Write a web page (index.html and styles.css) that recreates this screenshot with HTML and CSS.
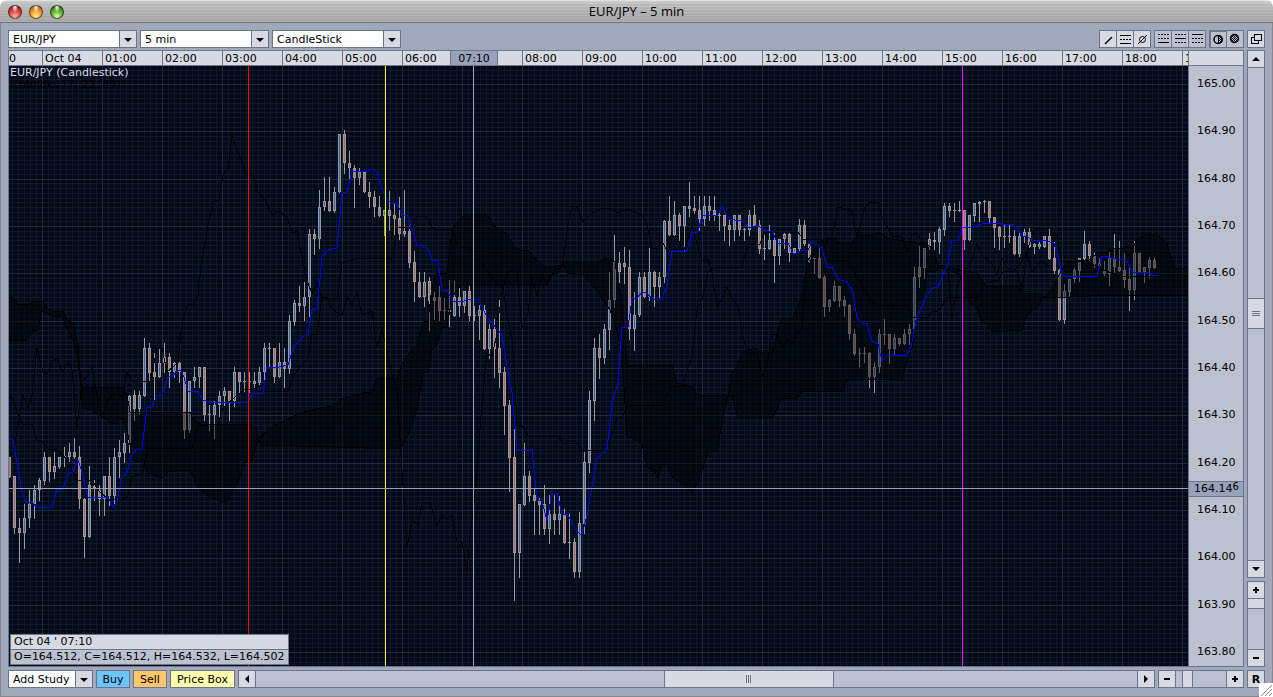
FILE: index.html
```html
<!DOCTYPE html>
<html lang="en">
<head>
  <meta charset="UTF-8">
  <title>EUR/JPY – 5 min</title>
  <link rel="stylesheet" href="styles.css">
</head>
<body>
  <header class="titlebar">
    <div class="lights">
      <button class="light red" aria-label="Close"></button>
      <button class="light amber" aria-label="Minimize"></button>
      <button class="light green" aria-label="Zoom"></button>
    </div>
    <h1>EUR/JPY – 5 min</h1>
  </header>

  <main class="window">
    <div class="toolbar">
      <div class="combo">
        <select aria-label="Instrument"><option>EUR/JPY</option></select>
      </div>
      <div class="combo">
        <select aria-label="Interval"><option>5 min</option></select>
      </div>
      <div class="combo">
        <select aria-label="Chart type"><option>CandleStick</option></select>
      </div>

      <div class="tools">
        <button aria-label="Trend line"><svg viewBox="0 0 16 16"><path d="M5 13L12 6" stroke-width="1.5"/></svg></button>
        <button aria-label="Channel"><svg viewBox="0 0 16 16"><path class="crisp" d="M3 4.5h11M3 12.5h11"/><path class="crisp" d="M3 8.5h11" stroke-dasharray="2 1"/></svg></button>
        <button aria-label="Remove lines"><svg viewBox="0 0 16 16"><circle cx="8.500" cy="8.500" r="3"/><path d="M4 13L13 4"/></svg></button>
      </div>
      <div class="tools flat">
        <button aria-label="Levels bottom"><svg viewBox="0 0 16 16"><path class="crisp" d="M3 3.500h11M3 7.500h11" stroke-dasharray="2 1"/><path class="crisp" d="M3 11.500h11"/></svg></button>
        <button aria-label="Levels middle"><svg viewBox="0 0 16 16"><path class="crisp" d="M3 3.500h11M3 11.500h11" stroke-dasharray="2 1"/><path class="crisp" d="M3 7.500h11"/></svg></button>
        <button aria-label="Levels top"><svg viewBox="0 0 16 16"><path class="crisp" d="M3 7.500h11M3 11.500h11" stroke-dasharray="2 1"/><path class="crisp" d="M3 3.500h11"/></svg></button>
      </div>
      <div class="tools flat">
        <button class="pressed" aria-label="Half shade"><svg viewBox="0 0 16 16"><circle cx="8" cy="8.500" r="4" stroke-width="1.5"/><path d="M8.500 4.500a4 4 0 0 1 0 8z" fill="url(#check)"/></svg></button>
        <button aria-label="Full shade"><svg viewBox="0 0 16 16"><circle cx="7.500" cy="7.500" r="4" fill="url(#check)" stroke-width="1.5"/></svg></button>
      </div>
      <div class="tools single">
        <button aria-label="Detach"><svg viewBox="0 0 16 16"><path class="crisp" d="M6.500 3.500h7v6h-7z" stroke-width="1.5"/><path class="crisp" d="M6 6.500H3.500v6h7V10" stroke-width="1.5"/></svg></button>
      </div>
    </div>

    <div class="middle">
      <div class="chart">
        <div class="times">
          <span class="part">0</span><span>Oct 04</span><span>01:00</span><span>02:00</span><span>03:00</span><span>04:00</span><span>05:00</span><span>06:00</span><span></span><span>08:00</span><span>09:00</span><span>10:00</span><span>11:00</span><span>12:00</span><span>13:00</span><span>14:00</span><span>15:00</span><span>16:00</span><span>17:00</span><span>18:00</span><span>19:00</span>
          <b class="time-mark">07:10</b>
        </div>
        <div class="corner"></div>
        <div class="plot">
          <svg id="plot" role="img" aria-label="EUR/JPY candlestick chart">
            <defs>
              <pattern id="check" width="2" height="2" patternUnits="userSpaceOnUse"><path d="M0 0h1v1H0zM1 1h1v1H1z" fill="#000" stroke="none"/></pattern>
            </defs>
            <g id="grid"></g>
            <g transform="translate(-9 -66)">
              <g id="candles"></g>
              <g id="clouds"></g>
              <g id="studies"></g>
            </g>
            <g id="marks"></g>
          </svg>
          <p class="legend">EUR/JPY (Candlestick)<br><span>Ichimoku (7, 22, 44)</span></p>
          <div class="quote">
            <div>Oct 04 ' 07:10</div>
            <div>O=164.512, C=164.512, H=164.532, L=164.502</div>
          </div>
        </div>
        <div class="prices">
          <span>165.00</span><span>164.90</span><span>164.80</span><span>164.70</span><span>164.60</span><span>164.50</span><span>164.40</span><span>164.30</span><span>164.20</span><span>164.10</span><span>164.00</span><span>163.90</span><span>163.80</span>
          <b class="price-mark">164.14<sup>6</sup></b>
        </div>
      </div>

      <div class="side">
        <div class="scroll vertical">
          <button aria-label="Scroll up"><i class="arrow up"></i></button>
          <div class="track"><span class="before"></span><span class="thumb"></span><span class="after"></span></div>
          <button aria-label="Scroll down"><i class="arrow down"></i></button>
        </div>
        <div class="scroll vertical zoom">
          <button aria-label="Zoom price in"><i class="plus"></i></button>
          <input type="range" aria-label="Price zoom" min="0" max="100" value="0">
          <button aria-label="Zoom price out"><i class="minus"></i></button>
        </div>
      </div>
    </div>

    <div class="bottom">
      <div class="combo study">
        <select aria-label="Add Study"><option>Add Study</option></select>
      </div>
      <button class="btn buy">Buy</button>
      <button class="btn sell">Sell</button>
      <button class="btn box">Price Box</button>
      <div class="scroll horizontal">
        <button aria-label="Scroll left"><i class="arrow left"></i></button>
        <div class="track"><span class="before"></span><span class="thumb"></span><span class="after"></span></div>
        <button aria-label="Scroll right"><i class="arrow right"></i></button>
      </div>
      <div class="scroll horizontal zoom">
        <button aria-label="Zoom time out"><i class="minus"></i></button>
        <input type="range" aria-label="Time zoom" min="0" max="100" value="15">
        <button aria-label="Zoom time in"><i class="plus"></i></button>
      </div>
      <button class="btn reset">R</button>
    </div>
    <svg class="grip" viewBox="0 0 14 14"><path d="M2 13L13 2M6 13L13 6M10 13L13 10"/></svg>
  </main>

  <script src="chart.js"></script>
</body>
</html>
```
FILE: styles.css
```css
* {
  box-sizing: border-box;
}
body {
  margin: 0;
  height: 100vh;
  display: flex;
  flex-direction: column;
  background: #fff;
  color: #000;
  font: 11px/14px "Lucida Sans", "DejaVu Sans", sans-serif;
}
button, select, input {
  font: inherit;
  color: inherit;
  margin: 0;
  padding: 0;
  border: 0;
  border-radius: 0;
}
.titlebar {
  position: relative;
  height: 23px;
  flex: none;
  border-bottom: 1px solid #77777a;
  border-radius: 7px 7px 0 0;
  background:
    repeating-linear-gradient(rgba(255,255,255,0.06) 0 1px, rgba(0,0,0,0.03) 1px 3px),
    linear-gradient(#e4e4e4 0, #c4c4c4 3px, #b6b6b6 50%, #a9a9a9 100%);
}
.titlebar h1 {
  margin: 0;
  text-align: center;
  font: 13px/23px "Lucida Grande", "Open Sans", "Noto Sans", sans-serif;
}
.lights {
  position: absolute;
  left: 8px;
  top: 5px;
  display: flex;
  gap: 7px;
}
.light {
  width: 14px;
  height: 14px;
  border-radius: 50%;
  border: 1px solid rgba(40,20,20,0.65);
}
.red {
  background: radial-gradient(ellipse at 50% 10%, #fff 0, rgba(255,255,255,0) 35%), radial-gradient(circle at 50% 85%, #ffb0a4, #d9453f 50%, #7a1414);
}
.amber {
  background: radial-gradient(ellipse at 50% 10%, #fff 0, rgba(255,255,255,0) 35%), radial-gradient(circle at 50% 85%, #fff08a, #f09a2c 50%, #8a4a08);
}
.green {
  background: radial-gradient(ellipse at 50% 10%, #fff 0, rgba(255,255,255,0) 35%), radial-gradient(circle at 50% 85%, #d8ff9a, #55ac2c 50%, #1d5a10);
}
.window {
  position: relative;
  flex: 1;
  min-height: 0;
  display: flex;
  flex-direction: column;
  padding: 7px 7px 8px;
  border: 1px solid #85858a;
  border-top: 0;
  background: #a0a9bb;
}
.toolbar {
  display: flex;
  gap: 3px;
  height: 18px;
  margin-bottom: 2px;
}

/* drop-downs */
.combo {
  position: relative;
  width: 129px;
  height: 18px;
}
.combo select {
  appearance: none;
  width: 100%;
  height: 18px;
  padding: 1px 20px 0 4px;
  border: 1px solid #6b7489;
  background: linear-gradient(#6b7489, #6b7489) right 16px top / 1px 100% no-repeat,
    linear-gradient(#d7dae3, #d7dae3) right / 16px 100% no-repeat, #fff;
}
.combo::after {
  content: "";
  position: absolute;
  right: 5px;
  top: 8px;
  border: 4px solid transparent;
  border-top-color: #000;
  border-bottom: 0;
  pointer-events: none;
}
.study {
  width: 85px;
}

/* icon buttons */
.tools {
  display: flex;
  border: 1px solid #6b7489;
}
.tools:nth-of-type(4) {
  margin-left: auto;
}
.tools button {
  width: 17px;
  height: 16px;
  background: #d7dae3;
  border-left: 1px solid #6b7489;
}
.tools button:first-child {
  width: 16px;
  border-left: 0;
}
.flat button {
  background: #bcc1cf;
}
.tools .pressed {
  width: 17px;
  box-shadow: inset 1px 1px #77777a;
}
.tools svg {
  display: block;
  width: 16px;
  height: 16px;
  fill: none;
  stroke: #000;
}
.crisp {
  shape-rendering: crispEdges;
}

/* chart */
.middle {
  flex: 1;
  min-height: 0;
  display: flex;
  gap: 3px;
  margin-bottom: 3px;
}
.chart {
  flex: 1;
  min-width: 0;
  display: grid;
  grid-template: 15px minmax(0, 1fr) / minmax(0, 1fr) 55px;
  border: 1px solid #6b7489;
  background: #bcc1cf;
}
.times {
  position: relative;
  display: flex;
  overflow: hidden;
  line-height: 15px;
  background: #d7dae3;
  border-bottom: 1px solid #6b7489;
}
.times span {
  flex: none;
  width: 60px;
  padding-left: 2px;
  border-left: 1px solid #6b7489;
}
.times .part {
  width: 33px;
  padding-left: 0;
  border-left: 0;
}
.time-mark {
  position: absolute;
  left: 441px;
  width: 48px;
  height: 14px;
  border: solid #6b7489;
  border-width: 0 1px;
  background: #98a3bb;
  font-weight: normal;
  text-align: center;
}
.corner {
  background: #d7dae3;
  border-left: 1px solid #6b7489;
  border-bottom: 1px solid #6b7489;
}
.plot {
  position: relative;
  overflow: hidden;
  background: #020a1a;
}
.plot > svg {
  display: block;
  width: 100%;
  height: 100%;
  shape-rendering: crispEdges;
}
.legend {
  position: absolute;
  left: 1px;
  top: 1px;
  margin: 0;
  line-height: 12px;
  color: #d8dce4;
}
.legend span {
  color: #000;
}
.quote {
  position: absolute;
  left: 1px;
  bottom: 1px;
  border: 1px solid #6b7489;
  background: #bcc1cf;
}
.quote div {
  padding: 0 3px;
}
.quote div:first-child {
  height: 15px;
  background: #d7dae3;
  border-bottom: 1px solid #6b7489;
}
.prices {
  position: relative;
  display: flex;
  flex-direction: column;
  justify-content: space-between;
  padding: 11px 0 7px 8px;
  border-left: 1px solid #6b7489;
}
.price-mark {
  position: absolute;
  left: 0;
  right: 0;
  top: 415px;
  height: 16px;
  padding-left: 5px;
  border: solid #6b7489;
  border-width: 1px 0;
  background: #98a3bb;
  font-weight: normal;
}
.price-mark sup {
  font-size: 10px;
  line-height: 0;
  vertical-align: 2px;
}

/* scroll bars */
.side {
  display: flex;
  flex-direction: column;
  gap: 3px;
  width: 18px;
}
.scroll {
  display: flex;
  border: 1px solid #6b7489;
  background: #bcc1cf;
}
.scroll button {
  display: grid;
  place-items: center;
  flex: none;
  width: 16px;
  height: 16px;
  background: #d7dae3;
}
.vertical {
  flex-direction: column;
  flex: 1;
}
.vertical.zoom {
  flex: none;
  height: 86px;
}
.horizontal {
  flex: 1;
}
.horizontal.zoom {
  flex: none;
  width: 86px;
}
.track {
  flex: 1;
  display: flex;
}
.vertical .track {
  flex-direction: column;
  border: solid #6b7489;
  border-width: 1px 0;
}
.horizontal .track {
  border: solid #6b7489;
  border-width: 0 1px;
}
.vertical .before {
  flex: 230;
}
.vertical .after {
  flex: 231;
}
.horizontal .before {
  flex: 409;
}
.horizontal .after {
  flex: 304;
}
.thumb {
  background: #d7dae3;
}
.vertical .thumb {
  height: 31px;
  border: solid #6b7489;
  border-width: 1px 0;
  background: repeating-linear-gradient(#6b7489 0 1px, transparent 1px 2px) center / 8px 5px no-repeat, #d7dae3;
}
.horizontal .thumb {
  flex: 168;
  border: solid #6b7489;
  border-width: 0 1px;
  background: repeating-linear-gradient(90deg, #6b7489 0 1px, transparent 1px 2px) center / 5px 8px no-repeat, #d7dae3;
}
.zoom input {
  appearance: none;
  flex: 1;
  min-width: 0;
  min-height: 0;
  background: none;
}
.vertical input {
  writing-mode: vertical-lr;
  width: 16px;
  border: solid #6b7489;
  border-width: 1px 0;
}
.horizontal input {
  height: 16px;
  border: solid #6b7489;
  border-width: 0 1px;
}
.zoom input::-webkit-slider-thumb {
  appearance: none;
  width: 11px;
  height: 16px;
  border: solid #6b7489;
  border-width: 0 1px;
  background: #d7dae3;
}
.vertical input::-webkit-slider-thumb {
  width: 16px;
  height: 10px;
  border-width: 0 0 1px;
}
.arrow {
  border: 4px solid transparent;
}
.up {
  border-top: 0;
  border-bottom-color: #000;
}
.down {
  border-bottom: 0;
  border-top-color: #000;
}
.left {
  border-left: 0;
  border-right-color: #000;
}
.right {
  border-right: 0;
  border-left-color: #000;
}
.plus, .minus {
  width: 6px;
  height: 6px;
  background: linear-gradient(#000, #000) center / 6px 2px no-repeat;
}
.plus {
  background: linear-gradient(#000, #000) center / 6px 2px no-repeat,
    linear-gradient(#000, #000) center / 2px 6px no-repeat;
}

/* bottom bar */
.bottom {
  display: flex;
  gap: 3px;
  height: 18px;
}
.btn {
  width: 34px;
  padding-top: 1px;
  border: 1px solid #6b7489;
  line-height: 14px;
}
.buy {
  background: #6cc5ff;
}
.sell {
  background: #ffc66c;
}
.box {
  width: 65px;
  background: #ffffb0;
}
.reset {
  width: 18px;
  background: #d7dae3;
  font-weight: bold;
}
.grip {
  position: absolute;
  right: -1px;
  bottom: -1px;
  width: 14px;
  height: 14px;
  background: #fff;
  border-radius: 2px 0 0 0;
  stroke: #888;
  fill: none;
}

/* chart shapes */
.minor {
  fill: #0d1828;
}
.major {
  fill: #202a3a;
}
.wick {
  fill: #999;
}
.up-body {
  fill: #3f64a4;
}
.down-body {
  fill: #b06a68;
}
#clouds path {
  fill: #000;
  fill-opacity: 0.4;
  stroke: #000;
}
#studies polyline {
  fill: none;
  stroke: #000;
}
#studies .fast {
  stroke: #00f;
}
```
FILE: chart.js
```js
const SVG = "http://www.w3.org/2000/svg";

// high, body top, body bottom, low, direction; one bar every 5 units
const bars = `
457 457 477 477 d,476 476 528 533 d,518 528 533 562 d,504 518 533 548 u,490 504 518 527 u,485 490 504 518 u,478 480 490 500 u,452 457 481 484 u,457 457 472 481 d,452 466 472 478 u,
457 457 467 468 u,447 456 457 466 d,443 452 457 461 u,438 452 457 458 d,446 457 499 508 d,498 499 537 557 d,466 485 537 537 u,480 486 488 500 d,485 490 499 515 d,476 476 499 515 u,
457 476 496 505 d,448 457 496 505 u,440 452 457 477 u,433 443 453 462 u,395 396 443 452 u,390 395 409 420 d,391 395 409 414 u,338 348 396 396 u,343 348 373 380 d,353 372 377 401 d,
348 363 377 377 u,343 357 363 372 d,353 357 372 387 d,362 363 372 377 u,362 363 372 382 d,372 372 430 438 d,381 381 430 432 u,367 377 381 387 u,367 367 377 387 u,367 367 415 420 d,
405 414 415 430 d,401 405 415 438 u,391 396 405 420 u,387 391 396 405 u,391 391 401 420 d,367 372 401 406 u,372 372 382 392 d,372 381 382 391 d,372 381 382 392 d,372 381 384 387 d,
367 372 383 384 u,343 348 372 381 u,343 348 349 367 d,348 348 377 382 d,343 362 377 377 u,348 362 369 387 d,315 321 369 373 u,300 303 322 325 u,286 303 306 311 d,282 297 306 320 u,
229 234 297 316 u,229 234 239 254 d,190 207 239 248 u,177 201 207 210 u,177 201 211 211 d,187 192 211 212 u,134 134 192 192 u,130 134 163 173 d,151 163 168 178 d,165 168 178 207 d,
168 172 178 184 u,172 172 192 192 d,182 192 197 207 d,191 197 207 216 d,196 207 216 216 d,210 210 216 235 u,191 210 216 230 d,204 215 219 234 d,197 218 234 239 d,190 231 234 236 u,
229 231 263 267 d,251 262 282 301 d,272 282 297 297 d,272 282 297 306 u,277 281 301 330 d,292 297 301 319 u,286 297 311 320 d,298 310 311 319 d,280 310 312 326 d,281 297 316 316 u,
286 297 306 316 d,291 291 306 312 u,286 291 316 320 d,306 315 316 320 d,305 310 316 339 u,305 310 349 349 d,324 329 349 358 u,319 329 349 377 d,300 348 373 387 d,367 372 406 434 d,
400 405 458 491 d,429 457 553 600 d,504 504 553 577 u,443 476 505 505 u,471 476 496 501 d,489 495 501 534 d,498 501 505 534 d,485 504 529 534 d,495 514 529 543 u,495 514 520 534 d,
496 514 520 534 u,509 514 543 543 d,514 542 543 558 d,538 542 572 577 d,512 523 572 577 u,452 462 524 533 u,391 400 463 472 u,338 348 401 420 u,334 348 358 378 d,324 329 358 363 u,
272 300 330 349 u,235 262 300 307 u,252 263 272 282 d,247 263 267 283 d,250 267 329 339 d,292 315 329 350 u,272 277 315 316 u,272 277 297 297 d,248 272 297 300 u,271 272 287 306 d,
272 277 287 297 u,220 221 277 282 u,196 221 235 235 d,201 215 235 236 u,213 215 226 240 d,206 206 226 250 u,182 206 209 216 d,196 208 211 213 d,196 210 219 230 d,196 206 219 225 u,
196 206 211 220 d,196 210 215 220 d,210 215 216 230 d,215 215 226 240 d,220 225 230 245 d,215 215 230 240 u,215 215 230 235 d,228 229 230 240 d,210 215 230 235 u,205 215 226 226 d,
220 225 249 253 d,235 248 249 259 d,225 240 249 249 u,233 240 256 282 d,239 239 256 264 u,233 234 239 248 u,232 234 253 261 d,248 248 253 253 u,219 225 249 250 u,220 225 244 245 d,
244 244 262 263 d,258 258 259 273 d,248 258 278 278 d,275 277 307 316 d,299 300 307 311 u,281 286 301 301 u,286 286 301 306 d,296 300 306 316 d,304 305 334 339 d,329 334 354 355 d,
348 353 354 366 d,347 353 354 362 d,352 353 377 387 d,362 367 377 392 u,329 334 367 372 u,319 334 335 344 d,334 334 349 363 d,334 338 349 354 u,338 338 344 345 d,329 334 344 344 u,
324 329 334 344 u,267 277 329 330 u,246 267 277 287 d,248 248 268 278 u,233 239 247 249 u,232 240 242 249 d,227 229 242 253 u,203 206 230 235 u,203 206 211 216 d,203 210 211 221 d,
201 210 211 211 d,210 210 240 249 d,215 215 240 240 u,203 203 216 221 u,201 202 204 221 u,200 201 202 212 u,201 201 218 223 d,217 217 228 247 d,226 227 237 249 d,225 236 237 247 d,
225 236 237 242 d,230 236 254 254 d,230 236 254 256 u,229 232 237 242 u,228 232 247 247 d,243 244 247 253 u,242 244 247 248 u,236 236 247 247 u,229 236 259 259 d,242 258 271 273 d,
269 270 320 320 d,284 291 320 323 u,279 279 292 297 u,268 270 279 282 u,258 258 271 281 u,231 244 259 259 u,241 244 256 260 d,253 256 264 267 d,258 263 266 267 d,261 270 274 275 d,
252 258 274 285 u,234 258 267 272 d,241 267 271 271 d,253 270 280 287 d,266 279 290 310 d,241 253 290 299 u,253 253 272 272 d,267 267 272 282 u,257 260 268 277 u,258 260 268 268 d`;

const clouds = [
  "9,297 13,298 18,304 27,305 33,302 42,301 48,309 52,311 63,311 67,320 73,323 78,345 81,387 77,355 73,340 68,331 62,316 52,316 42,311 38,330 33,330 27,340 9,340",
  "81,387 123,387 127,395 130,412 190,412 193,419 200,424 248,424 256,427 258,440 252,461 245,463 238,482 233,490 228,500 223,503 217,499 210,498 205,493 198,488 192,473 187,470 168,472 162,478 148,473 142,463 133,460 130,445 127,430 123,418 118,420 113,425 108,420 97,414 92,410 83,408",
  "257,440 270,428 300,413 320,408 332,406 342,399 352,396 362,393 372,392 377,379 397,378 402,364 412,349 417,347 423,322 428,321 432,287 437,273 447,273 452,229 464,215 470,214 484,214 490,218 493,225 507,234 513,245 520,251 528,250 538,262 548,268 562,265 555,272 545,284 462,284 452,297 447,327 442,328 437,343 432,350 428,372 423,373 417,408 408,435 400,449 262,445",
  "562,262 598,262 608,258 615,262 618,283 622,303 627,365 672,365 677,383 692,387 697,395 728,395 723,417 717,450 708,453 698,482 692,493 683,484 673,478 667,464 662,464 658,478 652,469 647,468 642,444 632,438 627,437 622,353 614,320 610,310 593,285 583,275 567,273",
  "728,397 732,372 737,367 742,352 755,348 763,353 772,353 777,335 782,318 793,318 802,297 807,262 817,245 822,242 833,238 840,243 852,243 858,235 873,235 879,232 888,238 908,242 925,244 933,248 938,265 937,270 927,273 923,299 918,300 915,330 912,348 908,357 902,379 847,379 843,391 802,391 797,398 782,398 773,417 738,417 732,396",
  "938,265 960,270 977,273 985,286 1018,286 1022,293 1038,293 1043,298 1037,307 1027,315 1022,330 993,332 988,325 982,322 977,308 970,303 965,293 960,275 948,269",
  "1043,298 1053,288 1058,277 1063,267 1070,262 1088,261 1097,253 1108,252 1114,248 1123,249 1127,246 1133,249 1136,240 1147,234 1158,235 1167,243 1172,262 1175,268 1190,268 1190,295 1110,295 1070,297"
];

const baseLine = "9,397 12,398 22,424 32,424 37,440 42,441 47,449 58,450 67,460 72,470 77,480 92,480 98,490 108,499 125,499 128,495 132,477 143,473 147,448 192,448 198,426 218,424 223,408 235,397 245,389 258,391 288,391 293,378 298,369 307,360 312,335 317,334 322,298 337,298 342,263 357,258 393,258 397,227 412,227 417,216 423,216 428,218 433,229 452,229 458,247 467,248 473,253 480,262 487,270 497,284 503,288 507,315 512,340 514,367 517,425 522,426 528,436 558,436 562,443 578,443 582,450 607,450 617,418 623,416 628,405 662,405 672,386 683,386 688,367 692,358 698,300 702,300 708,272 717,267 742,267 748,244 760,244 764,232 798,232 803,239 822,239 828,260 847,260 857,277 872,302 878,305 907,305 912,317 927,318 932,312 938,311 948,297 978,297 985,283 998,280 1003,272 1013,271 1018,267 1027,252 1032,235 1037,228 1052,228 1057,236 1062,262 1077,261 1088,260 1097,268 1120,276 1160,276";

const lagLine = "9,455 13,453 17,432 23,395 28,408 32,395 37,348 43,372 47,375 52,362 57,358 62,372 68,362 72,370 77,429 82,381 87,377 92,367 98,402 102,415 107,403 113,393 117,393 123,398 127,372 132,381 150,382 157,349 162,348 167,372 173,367 178,362 182,322 188,304 193,304 198,296 199,280 207,230 213,202 219,200 223,175 228,170 232,135 237,150 243,165 248,177 253,173 258,192 265,200 272,215 278,211 287,217 292,233 297,231 303,262 308,283 312,294 317,282 322,298 327,297 332,310 342,315 347,297 352,305 357,292 362,315 372,311 377,348 382,330 387,350 392,375 397,390 402,470 407,548 412,520 418,525 422,503 430,502 437,527 442,514 447,519 452,515 457,542 462,542 467,570 470,537 474,503 478,457 482,403 487,353 492,357 497,333 499,313 503,288 508,272 517,270 522,328 528,313 532,278 537,296 542,274 547,286 552,274 558,273 563,262 568,225 572,206 577,207 583,222 592,213 602,208 612,209 617,213 627,209 642,215 647,225 652,248 657,249 662,241 668,253 672,238 677,235 683,252 687,242 692,226 702,261 708,259 712,273 717,307 722,299 727,287 732,299 738,306 742,333 748,354 757,353 762,377 767,365 772,334 777,334 782,348 788,339 793,343 797,332 802,329 807,270 812,258 818,242 832,237 838,207 852,211 857,237 865,207 870,202 878,202 882,217 892,236 902,237 907,252 912,235 917,233 922,242 933,248 938,268 948,270 952,318 958,283 965,272 972,260 977,244 982,255 992,264 997,275 1002,258 1007,268 1017,272 1022,290 1027,253 1032,272 1042,260 1048,267";

const fastLine = "9,439 13,440 17,463 23,497 27,502 33,503 37,508 52,507 57,489 63,489 68,474 73,472 78,460 82,472 88,497 108,497 113,507 117,502 122,477 127,473 132,455 137,449 142,449 147,407 152,407 157,395 162,395 168,377 173,376 177,370 181,371 184,377 188,391 198,391 203,400 211,402 248,402 253,393 263,393 267,367 279,367 288,365 293,349 302,337 308,334 312,309 317,309 322,257 327,251 332,248 337,248 342,193 347,192 352,171 367,171 372,169 377,172 382,189 388,201 392,203 397,203 402,215 408,216 417,245 423,246 428,249 432,260 438,261 442,290 447,290 453,301 464,301 468,299 478,299 487,317 502,335 507,367 512,393 517,450 532,450 537,500 542,501 547,521 552,493 557,493 562,514 568,515 577,532 582,535 587,515 597,458 607,450 612,403 618,383 622,327 628,327 632,299 637,298 642,292 647,293 652,299 662,299 667,285 672,251 687,251 692,232 698,232 702,215 718,215 722,206 728,219 742,221 748,227 753,227 757,225 764,230 773,232 777,243 788,243 793,253 797,253 802,250 808,250 812,242 822,248 827,267 832,267 838,279 847,282 853,293 857,318 862,323 867,323 872,341 878,344 882,361 888,355 907,355 911,347 917,317 927,295 933,288 938,287 948,263 952,241 958,240 963,227 972,227 985,223 998,223 1002,224 1012,224 1017,227 1022,236 1027,237 1032,240 1043,240 1054,243 1058,257 1062,275 1065,276 1097,276 1102,256 1109,257 1122,260 1127,261 1132,272 1147,272 1152,275 1158,275";

function add(id, name, attrs) {
  const el = document.createElementNS(SVG, name);
  for (const key in attrs) el.setAttribute(key, attrs[key]);
  document.getElementById(id).appendChild(el);
}

function rect(id, x, y, width, height, cls) {
  add(id, "rect", { x, y, width, height, class: cls });
}

function drawGrid() {
  // ten minor lines to each hour and to each 0.10 of price
  for (let i = 0; i < 400; i++) {
    if (i % 10 !== 5) rect("grid", 3 + i * 6, 0, 1, "100%", "minor");
  }
  for (let i = -3; i < 250; i++) {
    if (i % 10 !== 0) rect("grid", 0, Math.round(18 + i * 4.735), "100%", 1, "minor");
  }
  for (let i = 0; i < 40; i++) rect("grid", 33 + i * 60, 0, 1, "100%", "major");
  for (let i = 0; i < 25; i++) rect("grid", 0, Math.round(18 + i * 47.35), "100%", 1, "major");
}

function drawCandles() {
  bars.trim().split(",").forEach((bar, i) => {
    const [high, top, bottom, low, dir] = bar.trim().split(" ");
    const x = 9 + i * 5;
    const height = bottom - top;
    rect("candles", x, high, 1, low - high + 1, "wick");
    rect("candles", x - 1, top, 3, Math.max(height, 1), "wick");
    if (height > 2) rect("candles", x, +top + 1, 1, height - 2, dir === "u" ? "up-body" : "down-body");
  });
}

function drawStudies() {
  clouds.forEach(points => add("clouds", "path", { d: "M" + points + "z" }));
  add("studies", "polyline", { points: baseLine });
  add("studies", "polyline", { points: lagLine });
  add("studies", "polyline", { points: fastLine, class: "fast" });
}

function drawMarks() {
  add("marks", "rect", { x: 239, y: 0, width: 1, height: "100%", fill: "#f00" });
  add("marks", "rect", { x: 376, y: 0, width: 1, height: "100%", fill: "#ff0" });
  add("marks", "rect", { x: 953, y: 0, width: 1, height: "100%", fill: "#f0f" });
  add("marks", "rect", { x: 464, y: 0, width: 1, height: "100%", fill: "#98a3bb" });
  add("marks", "rect", { x: 0, y: 422, width: "100%", height: 1, fill: "#98a3bb" });
}

drawGrid();
drawCandles();
drawStudies();
drawMarks();
```
